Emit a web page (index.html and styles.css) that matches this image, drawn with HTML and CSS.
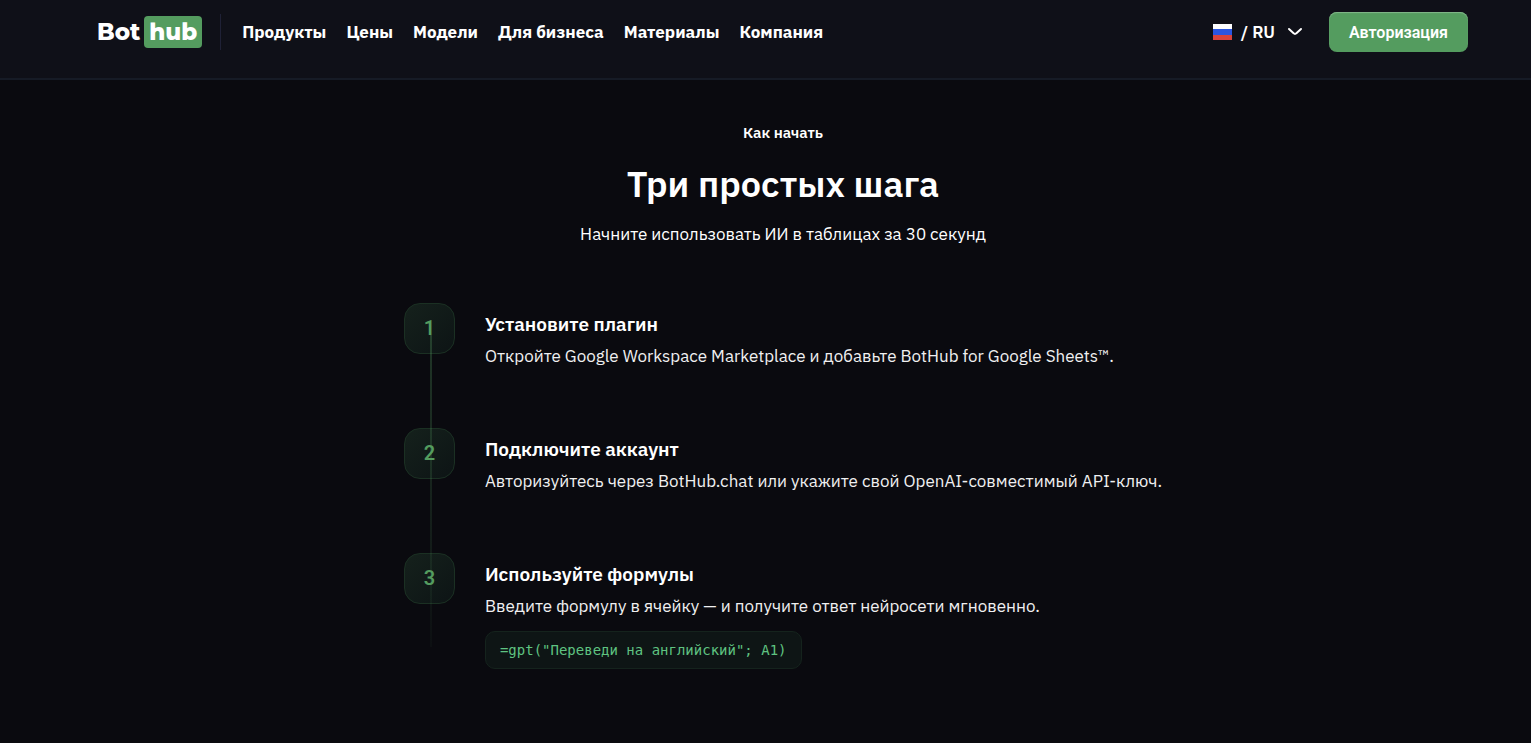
FILE: index.html
```html
<!DOCTYPE html>
<html lang="ru">
<head>
<meta charset="utf-8">
<meta name="viewport" content="width=device-width, initial-scale=1">
<title>BotHub</title>
<link rel="stylesheet" href="styles.css">
</head>
<body>
<header class="header">
  <a class="logo" href="#"><span>Bot</span><span class="logo-box">hub</span></a>
  <nav class="nav">
    <a href="#">Продукты</a>
    <a href="#">Цены</a>
    <a href="#">Модели</a>
    <a href="#">Для бизнеса</a>
    <a href="#">Материалы</a>
    <a href="#">Компания</a>
  </nav>
  <button class="lang" type="button">
    <svg class="flag" viewBox="0 0 19 16" aria-hidden="true"><path fill="#fff" d="M0 0h19v6H0z"/><path fill="#2b55e0" d="M0 5h19v6H0z"/><path fill="#d8433c" d="M0 11h19v5H0z"/></svg>
    <span>/ RU</span>
    <svg class="chevron" viewBox="0 0 16 10" aria-hidden="true"><path d="M2 2l4.6 4.3q1.4 1.1 2.8 0L14 2" fill="none" stroke="#fff" stroke-width="2" stroke-linecap="round" stroke-linejoin="round"/></svg>
  </button>
  <button class="login" type="button">Авторизация</button>
</header>
<main class="main">
  <p class="eyebrow">Как начать</p>
  <h1 class="title">Три простых шага</h1>
  <p class="subtitle">Начните использовать ИИ в таблицах за 30 секунд</p>
  <ol class="steps">
    <li class="step">
      <span class="badge">1</span>
      <div class="step-text">
        <h2>Установите плагин</h2>
        <p>Откройте Google Workspace Marketplace и добавьте BotHub for Google Sheets™.</p>
      </div>
    </li>
    <li class="step">
      <span class="badge">2</span>
      <div class="step-text">
        <h2>Подключите аккаунт</h2>
        <p>Авторизуйтесь через BotHub.chat или укажите свой OpenAI-совместимый API-ключ.</p>
      </div>
    </li>
    <li class="step">
      <span class="badge">3</span>
      <div class="step-text">
        <h2>Используйте формулы</h2>
        <p>Введите формулу в ячейку — и получите ответ нейросети мгновенно.</p>
        <code class="formula">=gpt("Переведи на английский"; A1)</code>
      </div>
    </li>
  </ol>
</main>
</body>
</html>
```
FILE: styles.css
```css
* { box-sizing: border-box; }
body {
  margin: 0;
  min-height: 100vh;
  background: #0a0a0f;
  color: #fff;
  font-family: "IBM Plex Sans", "Noto Sans", sans-serif;
}
h1, h2, p, ol { margin: 0; padding: 0; }
ol { list-style: none; }
a { color: inherit; text-decoration: none; }
button { border: 0; background: none; color: inherit; font: inherit; padding: 0; cursor: pointer; }

.header {
  display: flex;
  align-items: center;
  padding: 12px 63px 26px 97px;
  background: #0f1018;
  border-bottom: 2px solid #161b26;
}
.logo {
  display: flex;
  align-items: center;
  gap: 4px;
  font: 800 23px/32px Montserrat, sans-serif;
}
.logo-box {
  padding: 0 5px;
  border-radius: 4px;
  background: #549c5f;
}
.nav {
  display: flex;
  align-items: center;
  gap: 20px;
  height: 36px;
  margin-left: 18px;
  padding-left: 21px;
  border-left: 1px solid #1f2136;
  font-size: 17px;
  font-weight: 700;
  white-space: nowrap;
}
.lang {
  display: flex;
  align-items: center;
  margin-left: auto;
  font-size: 17px;
  line-height: 24px;
  font-weight: 600;
}
.flag { width: 19px; height: 16px; margin-right: 9px; }
.chevron { width: 16px; height: 10px; margin-left: 12px; }
.login {
  height: 40px;
  margin-left: 26px;
  padding: 0 20px;
  border-radius: 8px;
  background: #549c5f;
  box-shadow: inset 0 1px 1px #83b88b;
  font-family: Roboto, sans-serif;
  font-size: 16px;
  font-weight: 600;
}

.main {
  display: flex;
  flex-direction: column;
  align-items: center;
  padding: 41px 63px 60px 98px;
}
.eyebrow { font-size: 15px; line-height: 24px; font-weight: 600; }
.title { margin-top: 16px; font-size: 36px; line-height: 46px; font-weight: 600; }
.subtitle { margin-top: 14px; font-size: 17px; line-height: 26px; }
.steps { position: relative; margin-top: 56px; }
.steps::after {
  content: "";
  position: absolute;
  top: 32px;
  bottom: 22px;
  left: 26px;
  width: 2px;
  background: linear-gradient(rgba(84, 156, 95, .3), rgba(84, 156, 95, .04));
}
.step { display: flex; gap: 30px; min-height: 125px; }
.step:last-child { min-height: 0; }
.badge {
  display: flex;
  align-items: center;
  justify-content: center;
  flex: none;
  width: 51px;
  height: 51px;
  padding-bottom: 2px;
  border: 1px solid #1b3023;
  border-radius: 16px;
  background: linear-gradient(135deg, #15211c, #0d1415);
  color: #549c5f;
  font-family: Roboto, sans-serif;
  font-size: 20px;
  font-weight: 600;
}
.step-text { padding-top: 8px; }
.step-text h2 { font-size: 19px; line-height: 26px; font-weight: 600; }
.step-text p { margin-top: 6px; font-size: 17px; line-height: 26px; color: #f0f0f1; }
.formula {
  display: inline-block;
  margin-top: 12px;
  padding: 8px 14px;
  border: 1px solid #15231d;
  border-radius: 10px;
  background: #0e1515;
  color: #5fc381;
  font: 14px/20px "DejaVu Sans Mono", monospace;
}
```
